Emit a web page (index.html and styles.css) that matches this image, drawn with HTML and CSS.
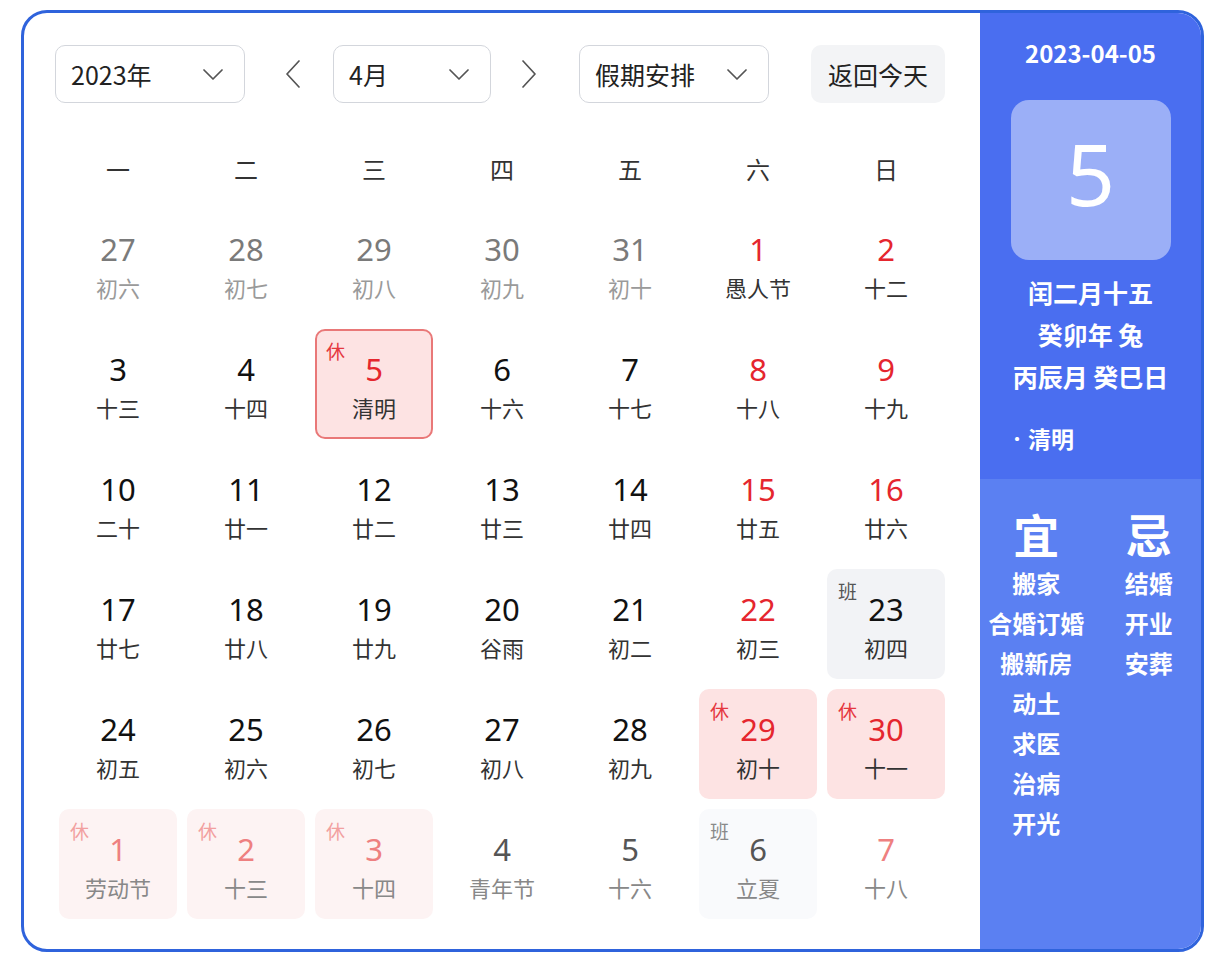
FILE: index.html
```html
<!DOCTYPE html>
<html lang="zh-CN">
<head>
<meta charset="utf-8">
<title>万年历</title>
<link rel="stylesheet" href="styles.css">
</head>
<body>
<div class="app">
  <div class="main">
    <div class="controls">
      <div class="select sel-year"><span>2023年</span><svg class="chev" width="20" height="11" viewBox="0 0 20 11"><polyline points="1,1 10,10 19,1"/></svg></div>
      <div class="arrow arrow-prev"><svg width="16" height="28" viewBox="0 0 16 28"><polyline points="14,1 2,14 14,27"/></svg></div>
      <div class="select sel-month"><span>4月</span><svg class="chev" width="20" height="11" viewBox="0 0 20 11"><polyline points="1,1 10,10 19,1"/></svg></div>
      <div class="arrow arrow-next"><svg width="16" height="28" viewBox="0 0 16 28"><polyline points="2,1 14,14 2,27"/></svg></div>
      <div class="select sel-holiday"><span>假期安排</span><svg class="chev" width="20" height="11" viewBox="0 0 20 11"><polyline points="1,1 10,10 19,1"/></svg></div>
      <div class="btn-today">返回今天</div>
    </div>
    <div class="weekdays">
      <div>一</div><div>二</div><div>三</div><div>四</div><div>五</div><div>六</div><div>日</div>
    </div>
    <div class="grid">
      <div class="cell prev"><div class="num">27</div><div class="lunar">初六</div></div>
      <div class="cell prev"><div class="num">28</div><div class="lunar">初七</div></div>
      <div class="cell prev"><div class="num">29</div><div class="lunar">初八</div></div>
      <div class="cell prev"><div class="num">30</div><div class="lunar">初九</div></div>
      <div class="cell prev"><div class="num">31</div><div class="lunar">初十</div></div>
      <div class="cell red"><div class="num">1</div><div class="lunar">愚人节</div></div>
      <div class="cell red"><div class="num">2</div><div class="lunar">十二</div></div>

      <div class="cell"><div class="num">3</div><div class="lunar">十三</div></div>
      <div class="cell"><div class="num">4</div><div class="lunar">十四</div></div>
      <div class="cell red rest selected"><span class="badge">休</span><div class="num">5</div><div class="lunar">清明</div></div>
      <div class="cell"><div class="num">6</div><div class="lunar">十六</div></div>
      <div class="cell"><div class="num">7</div><div class="lunar">十七</div></div>
      <div class="cell red"><div class="num">8</div><div class="lunar">十八</div></div>
      <div class="cell red"><div class="num">9</div><div class="lunar">十九</div></div>

      <div class="cell"><div class="num">10</div><div class="lunar">二十</div></div>
      <div class="cell"><div class="num">11</div><div class="lunar">廿一</div></div>
      <div class="cell"><div class="num">12</div><div class="lunar">廿二</div></div>
      <div class="cell"><div class="num">13</div><div class="lunar">廿三</div></div>
      <div class="cell"><div class="num">14</div><div class="lunar">廿四</div></div>
      <div class="cell red"><div class="num">15</div><div class="lunar">廿五</div></div>
      <div class="cell red"><div class="num">16</div><div class="lunar">廿六</div></div>

      <div class="cell"><div class="num">17</div><div class="lunar">廿七</div></div>
      <div class="cell"><div class="num">18</div><div class="lunar">廿八</div></div>
      <div class="cell"><div class="num">19</div><div class="lunar">廿九</div></div>
      <div class="cell"><div class="num">20</div><div class="lunar">谷雨</div></div>
      <div class="cell"><div class="num">21</div><div class="lunar">初二</div></div>
      <div class="cell red"><div class="num">22</div><div class="lunar">初三</div></div>
      <div class="cell work"><span class="badge">班</span><div class="num">23</div><div class="lunar">初四</div></div>

      <div class="cell"><div class="num">24</div><div class="lunar">初五</div></div>
      <div class="cell"><div class="num">25</div><div class="lunar">初六</div></div>
      <div class="cell"><div class="num">26</div><div class="lunar">初七</div></div>
      <div class="cell"><div class="num">27</div><div class="lunar">初八</div></div>
      <div class="cell"><div class="num">28</div><div class="lunar">初九</div></div>
      <div class="cell red rest"><span class="badge">休</span><div class="num">29</div><div class="lunar">初十</div></div>
      <div class="cell red rest"><span class="badge">休</span><div class="num">30</div><div class="lunar">十一</div></div>

      <div class="cell next red rest"><span class="badge">休</span><div class="num">1</div><div class="lunar">劳动节</div></div>
      <div class="cell next red rest"><span class="badge">休</span><div class="num">2</div><div class="lunar">十三</div></div>
      <div class="cell next red rest"><span class="badge">休</span><div class="num">3</div><div class="lunar">十四</div></div>
      <div class="cell next"><div class="num">4</div><div class="lunar">青年节</div></div>
      <div class="cell next"><div class="num">5</div><div class="lunar">十六</div></div>
      <div class="cell next work"><span class="badge">班</span><div class="num">6</div><div class="lunar">立夏</div></div>
      <div class="cell next red"><div class="num">7</div><div class="lunar">十八</div></div>
    </div>
  </div>
  <div class="side">
    <div class="side-top">
      <div class="side-date">2023-04-05</div>
      <div class="side-day">5</div>
      <div class="side-lunar">
        <div>闰二月十五</div>
        <div>癸卯年 兔</div>
        <div>丙辰月 癸巳日</div>
      </div>
      <div class="side-fest"><span class="dot">•</span>清明</div>
    </div>
    <div class="side-bottom">
      <div class="yj-col">
        <div class="yj-title">宜</div>
        <div class="yj-item">搬家</div>
        <div class="yj-item">合婚订婚</div>
        <div class="yj-item">搬新房</div>
        <div class="yj-item">动土</div>
        <div class="yj-item">求医</div>
        <div class="yj-item">治病</div>
        <div class="yj-item">开光</div>
      </div>
      <div class="yj-col">
        <div class="yj-title">忌</div>
        <div class="yj-item">结婚</div>
        <div class="yj-item">开业</div>
        <div class="yj-item">安葬</div>
      </div>
    </div>
  </div>
</div>
</body>
</html>
```

FILE: styles.css
```css
* { box-sizing: border-box; }
html, body { margin: 0; padding: 0; background: #ffffff; }
body {
  font-family: "Noto Sans CJK SC", "Noto Sans", sans-serif;
  color: #222;
  width: 1210px;
  height: 958px;
  overflow: hidden;
}
.app {
  margin: 10px 0 0 21px;
  width: 1183px;
  height: 942px;
  border: 3px solid #2f63dc;
  border-radius: 26px;
  display: flex;
  overflow: hidden;
  background: #fff;
}
.main {
  width: 956px;
  flex: none;
  padding: 32px 0 0 31px;
}
.controls {
  display: flex;
  align-items: center;
  height: 58px;
}
.select {
  height: 58px;
  border: 1px solid #d3d6dc;
  border-radius: 10px;
  display: flex;
  align-items: center;
  justify-content: space-between;
  padding: 0 21px 0 15px;
  font-size: 25px;
  color: #222;
  background: #fff;
}
.sel-year { width: 190px; }
.sel-month { width: 158px; }
.sel-holiday { width: 190px; }
.chev polyline, .arrow polyline {
  fill: none;
  stroke: #555;
  stroke-width: 1.7;
  stroke-linecap: round;
  stroke-linejoin: round;
}
.arrow {
  width: 40px;
  height: 58px;
  display: flex;
  align-items: center;
  justify-content: center;
}
.arrow-prev { margin: 0 20px 0 28px; }
.arrow-next { margin: 0 30px 0 18px; }
.btn-today {
  margin-left: 42px;
  width: 134px;
  height: 58px;
  border-radius: 10px;
  background: #f3f4f6;
  display: flex;
  align-items: center;
  justify-content: center;
  font-size: 25px;
  color: #222;
}
.weekdays {
  margin: 46px 0 20px 4px;
  display: grid;
  grid-template-columns: repeat(7, 118px);
  column-gap: 10px;
  height: 40px;
  align-items: center;
  text-align: center;
  font-size: 24px;
  color: #333;
  line-height: 40px;
}
.grid {
  margin-left: 4px;
  display: grid;
  grid-template-columns: repeat(7, 118px);
  grid-auto-rows: 110px;
  gap: 10px;
}
.cell {
  position: relative;
  border-radius: 10px;
  text-align: center;
  padding-top: 21px;
}
.num {
  font-family: "Noto Sans", "Noto Sans CJK SC", sans-serif;
  font-size: 31px;
  line-height: 38px;
  color: #111;
}
.lunar {
  font-size: 22px;
  line-height: 38px;
  color: #333;
}
.red .num { color: #e5262e; }
.prev .num { color: #7a7a7a; }
.prev .lunar { color: #9a9a9a; }
.rest { background: #fde3e3; }
.selected {
  border: 2px solid #e97878;
  padding-top: 19px;
}
.work { background: #f2f3f6; }
.badge {
  position: absolute;
  left: 11px;
  top: 10px;
  font-size: 19px;
  line-height: 24px;
  color: #e5383f;
}
.selected .badge { left: 9px; top: 8px; }
.work .badge { color: #555; }
.next .num { color: #555; }
.next .lunar { color: #888; }
.next.rest { background: #fdf3f3; }
.next.red .num { color: #ee8080; }
.next.rest .badge { color: #f2a0a0; }
.next.work { background: #f9fafc; }
.next.work .badge { color: #8a8a8a; }
.side {
  flex: 1;
  display: flex;
  flex-direction: column;
  color: #fff;
}
.side-top {
  height: 466px;
  background: #4a6ef0;
  display: flex;
  flex-direction: column;
  align-items: center;
  padding-top: 25px;
  font-weight: 700;
}
.side-date {
  font-size: 24px;
  line-height: 30px;
}
.side-day {
  margin-top: 32px;
  width: 160px;
  height: 160px;
  border-radius: 18px;
  background: rgba(255, 255, 255, 0.45);
  display: flex;
  align-items: center;
  justify-content: center;
  padding-bottom: 14px;
  font-family: "Noto Sans", sans-serif;
  font-weight: 400;
  font-size: 86px;
  line-height: 1;
}
.side-lunar {
  margin-top: 11px;
  text-align: center;
  font-size: 25px;
  line-height: 42px;
}
.side-fest {
  align-self: flex-start;
  margin: 26px 0 0 29px;
  font-size: 23px;
  line-height: 30px;
}
.dot { font-size: 16px; margin-right: 3px; vertical-align: 3px; }
.side-bottom {
  flex: 1;
  background: #5b80f2;
  display: flex;
  padding-top: 26px;
  font-weight: 700;
}
.yj-col {
  width: 50%;
  display: flex;
  flex-direction: column;
  align-items: center;
}
.yj-col:first-child { padding-left: 2px; }
.yj-col:last-child { padding-left: 6px; }
.yj-title {
  font-size: 46px;
  line-height: 56px;
  margin-bottom: 2px;
}
.yj-item {
  font-size: 24px;
  line-height: 40px;
  white-space: nowrap;
}
```
